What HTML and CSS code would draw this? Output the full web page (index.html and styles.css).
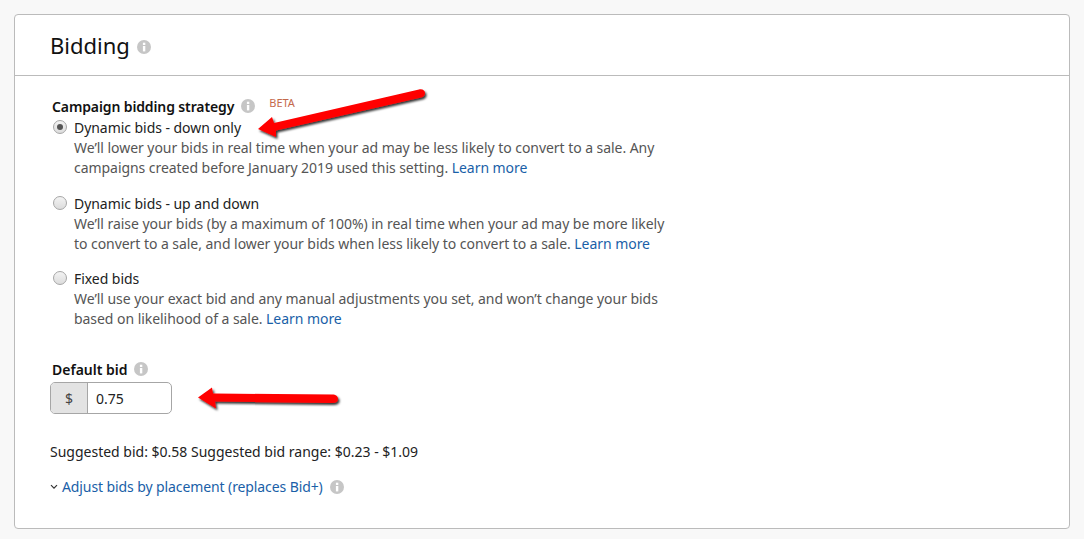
FILE: index.html
```html
<!DOCTYPE html>
<html lang="en">
<head>
<meta charset="utf-8"/>
<title>Bidding</title>
<link rel="stylesheet" href="styles.css">
</head>
<body>
<div class="card">

  <!-- header -->
  <div class="card-head">
    <h2>Bidding</h2>
    <svg class="info info-lg" viewBox="0 0 14 14"><use href="#i"/></svg>
  </div>

  <div class="card-body">
    <div class="label-row">
      <span class="label">Campaign bidding strategy</span>
      <svg class="info" viewBox="0 0 14 14"><use href="#i"/></svg>
      <span class="beta">BETA</span>
    </div>

    <div class="option">
      <span class="radio checked"></span>
      <div>
        <div class="opt-title">Dynamic bids - down only</div>
        <p>We’ll lower your bids in real time when your ad may be less likely to convert to a sale. Any<br>campaigns created before January 2019 used this setting. <a href="#">Learn more</a></p>
      </div>
    </div>

    <div class="option">
      <span class="radio"></span>
      <div>
        <div class="opt-title">Dynamic bids - up and down</div>
        <p>We’ll raise your bids (by a maximum of 100%) in real time when your ad may be more likely<br>to convert to a sale, and lower your bids when less likely to convert to a sale. <a href="#">Learn more</a></p>
      </div>
    </div>

    <div class="option">
      <span class="radio"></span>
      <div>
        <div class="opt-title">Fixed bids</div>
        <p>We’ll use your exact bid and any manual adjustments you set, and won’t change your bids<br>based on likelihood of a sale. <a href="#">Learn more</a></p>
      </div>
    </div>

    <div class="bid-label">
      <span class="label plain">Default bid</span>
      <svg class="info" viewBox="0 0 14 14"><use href="#i"/></svg>
    </div>
    <div class="bid-input">
      <span class="prefix">$</span>
      <span class="amount">0.75</span>
    </div>

    <div class="suggested">Suggested bid: $0.58 Suggested bid range: $0.23 - $1.09</div>

    <div class="adjust">
      <svg class="chev" viewBox="0 0 8 6"><path d="M1 1.2 4 4.2 7 1.2" fill="none" stroke="#333" stroke-width="1.2"/></svg>
      <a href="#">Adjust bids by placement (replaces Bid+)</a>
      <svg class="info" viewBox="0 0 14 14"><use href="#i"/></svg>
    </div>
  </div>
</div>

<!-- red annotation arrows -->
<svg class="arrows" viewBox="0 0 1084 539">
  <defs>
    <filter id="sh" x="-10%" y="-50%" width="120%" height="220%">
      <feDropShadow dx="1.5" dy="2" stdDeviation="1.3" flood-color="#000" flood-opacity=".8"/>
    </filter>
  </defs>
  <g filter="url(#sh)" fill="#f00">
    <path d="M258 129 272 117 274 123 419 89.500C423 88.800 425 91 425 93 425 95.500 423.500 97 421 97.500L276 130.500 276 137Z"/>
    <path d="M198 397.500 212 387.500 213 393.500 332 394.500C336 394.500 338 396.500 338 399 338 401.500 336 403 332 403L215 401.500 216 408.500Z"/>
  </g>
</svg>

<svg width="0" height="0" class="defs">
  <symbol id="i" viewBox="0 0 14 14">
    <circle cx="7" cy="7" r="7" fill="#c6c6c6"/>
    <rect x="5.900" y="6" width="2.400" height="5.400" fill="#fff"/>
    <rect x="5.900" y="2.700" width="2.400" height="2.300" fill="#fff"/>
  </symbol>
</svg>
</body>
</html>
```
FILE: styles.css
```css
*{box-sizing:border-box}
body{
  margin:0;
  width:1084px;
  height:539px;
  overflow:hidden;
  background:#f8f8f8;
  font-family:"Noto Sans",sans-serif;
  font-size:14px;
  color:#111;
  padding:14px 14px 0;
  position:relative;
}
a{color:#1a5fa8;text-decoration:none}
.defs{position:absolute}
.card{
  width:1056px;
  height:515px;
  background:#fff;
  border:1px solid #bbb;
  border-radius:4px;
}
.card-head{
  height:61px;
  border-bottom:1px solid #bbb;
  padding:0 35px;
  display:flex;
  align-items:center;
  gap:7px;
}
.card-head h2{
  margin:0;
  font-size:22px;
  font-weight:400;
  color:#111;
}
.info{width:14px;height:14px;flex:none}
.info-lg{margin-top:3px}
.card-body{padding:20px 35px 0}
.label-row{
  display:flex;
  align-items:center;
  height:20px;
  margin-bottom:2px;
  padding-left:2px;
}
.label{font-weight:600;letter-spacing:-.12px;color:#111}
.label.plain{letter-spacing:0}
.label-row .info{margin-left:7px}
.beta{
  font-size:11px;
  color:#c4694c;
  margin-left:14px;
  position:relative;
  top:-4px;
}
.option{
  display:flex;
  gap:7px;
  padding-left:3px;
  margin-bottom:15.5px;
  letter-spacing:-.05px;
}
.radio{
  width:14px;
  height:14px;
  margin-top:2px;
  flex:none;
  border-radius:50%;
  border:1px solid #a6a6a6;
  background:linear-gradient(#f3f3f3,#dcdcdc);
  position:relative;
}
.radio.checked::after{
  content:"";
  position:absolute;
  left:3px;
  top:3px;
  width:6px;
  height:6px;
  border-radius:50%;
  background:#555;
}
.opt-title{line-height:20px;color:#222}
.option p{margin:0;line-height:20px;color:#555}
.bid-label{
  display:flex;
  align-items:center;
  gap:6px;
  height:20px;
  padding-left:2px;
  margin-top:30px;
}
.bid-input{
  display:flex;
  width:122px;
  height:32px;
  margin-top:3px;
  border:1px solid #a6a6a6;
  border-radius:5px;
  overflow:hidden;
}
.prefix{
  width:37px;
  background:#e3e3e3;
  border-right:1px solid #a6a6a6;
  display:flex;
  align-items:center;
  justify-content:center;
  color:#444;
}
.amount{
  flex:1;
  padding-left:8px;
  display:flex;
  align-items:center;
  color:#222;
}
.suggested{margin-top:28px;line-height:20px;color:#222}
.adjust{
  margin-top:15px;
  display:flex;
  align-items:center;
  line-height:20px;
  letter-spacing:-.1px;
}
.chev{width:8px;height:6px;margin-right:4px}
.adjust .info{margin-left:7px}
.arrows{
  position:absolute;
  left:0;
  top:0;
  width:1084px;
  height:539px;
  pointer-events:none;
}
```
